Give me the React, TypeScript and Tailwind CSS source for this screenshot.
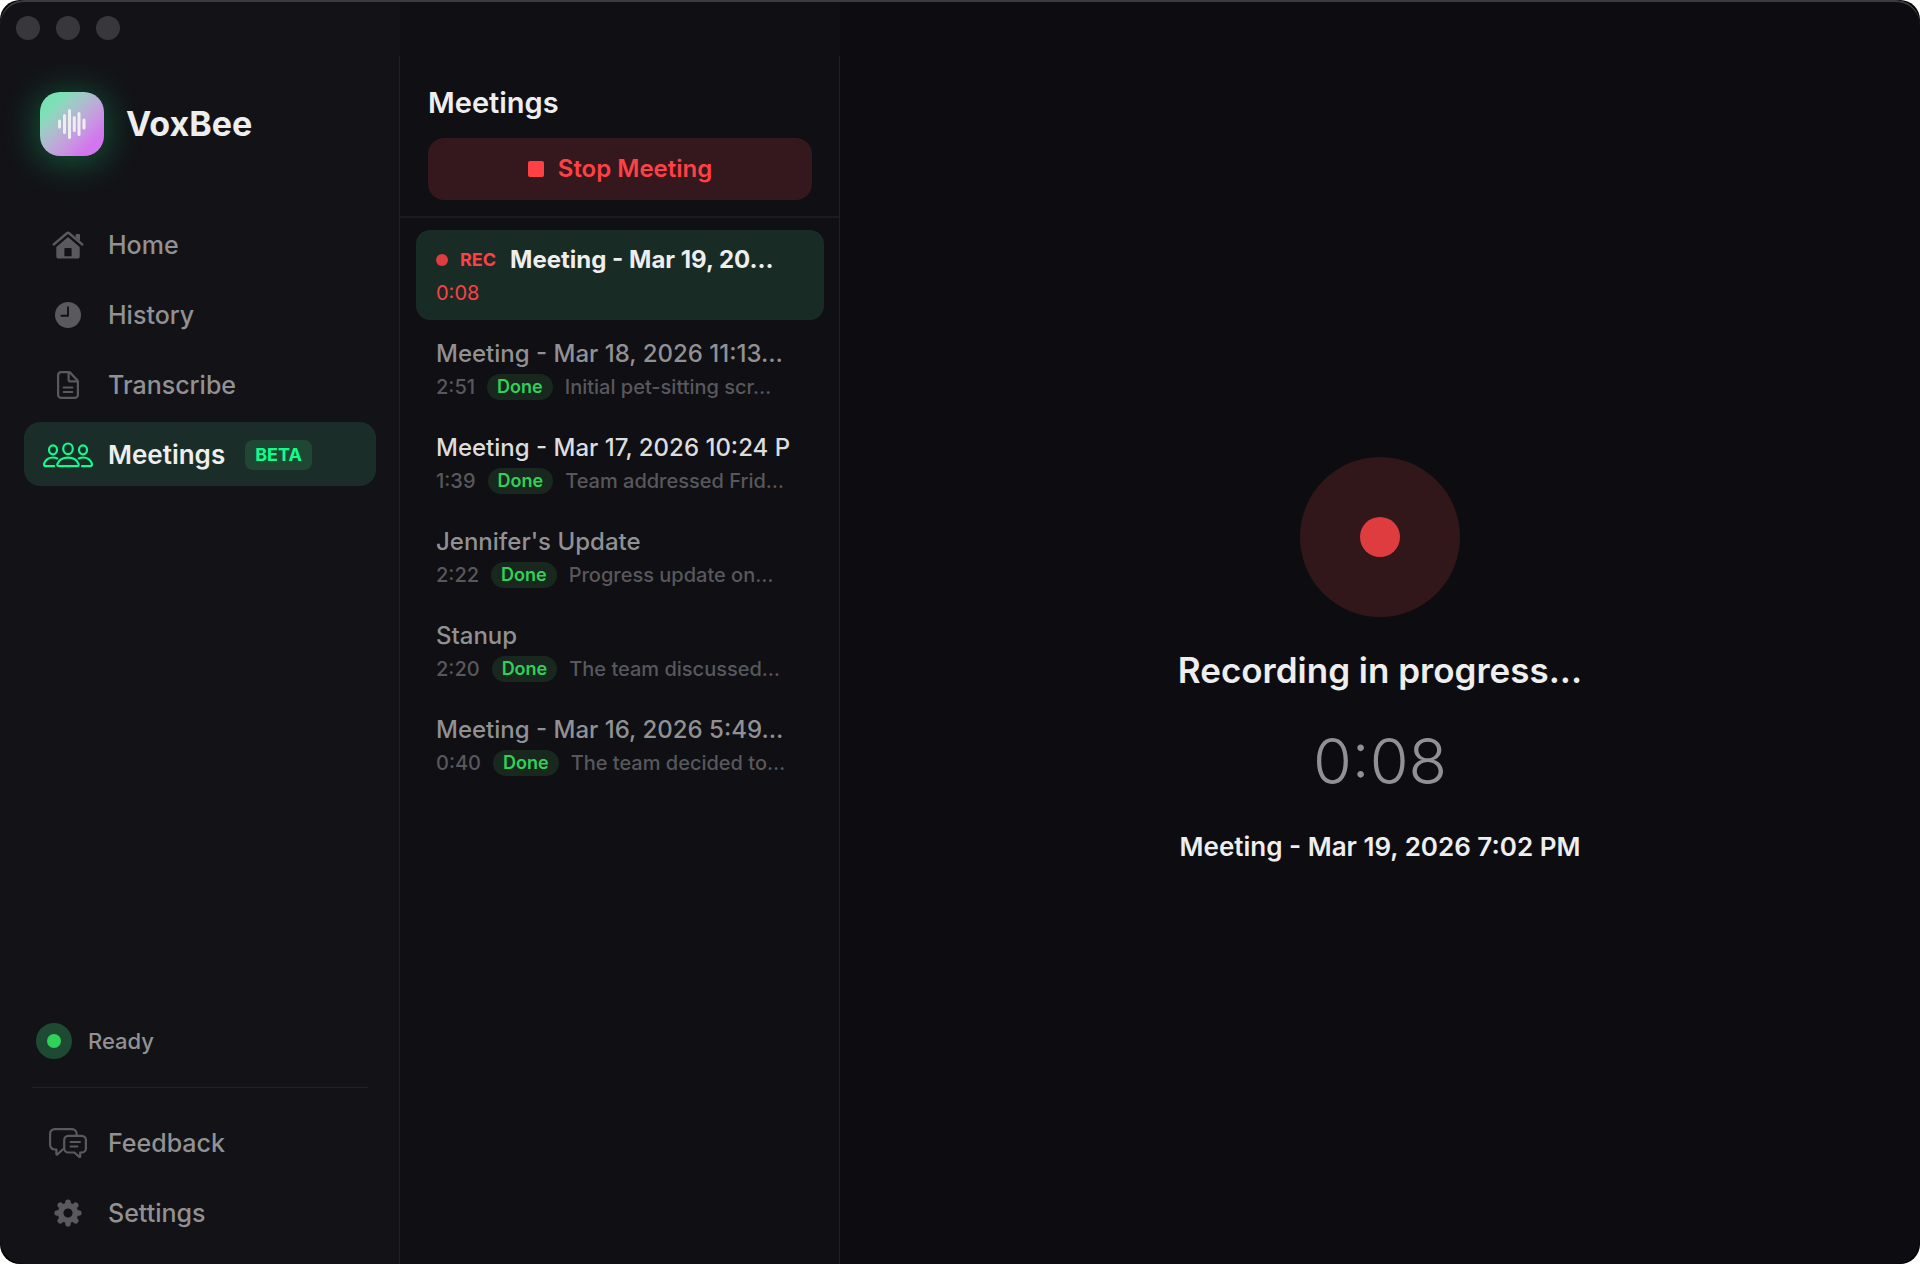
import React from 'react';
import clsx from 'clsx';

type IconProps = { className?: string };

function HomeIcon({ className }: IconProps) {
  return (
    <svg viewBox="0 0 32 28" className={className} fill="none" aria-hidden="true">
      <path d="M1.800 13.400 14.900 2.200a1.700 1.700 0 0 1 2.200 0L30.200 13.400" stroke="currentColor" strokeWidth="2.500" strokeLinecap="round" strokeLinejoin="round" />
      <path d="M23.600 4a1 1 0 0 1 1-1H27a1 1 0 0 1 1 1v6l-4.400-3.700Z" fill="currentColor" />
      <path fillRule="evenodd" d="M16 5.900 27.700 15.900V25a2.600 2.600 0 0 1-2.600 2.600H6.900A2.600 2.600 0 0 1 4.300 25v-9.100L16 5.900Zm-2.900 11a.7.7 0 0 0-.7.700v7.600h7.200v-7.600a.7.7 0 0 0-.7-.7h-5.800Z" fill="currentColor" />
    </svg>
  );
}

function ClockIcon({ className }: IconProps) {
  return (
    <svg viewBox="0 0 26 26" className={className} aria-hidden="true">
      <circle cx="13" cy="13" r="13" fill="currentColor" />
      <path d="M13 5.200v8.600H6.400" fill="none" stroke="#131317" strokeWidth="1.900" strokeLinecap="round" strokeLinejoin="round" />
    </svg>
  );
}

function DocIcon({ className }: IconProps) {
  return (
    <svg viewBox="0 0 22 28" className={className} fill="none" stroke="currentColor" strokeWidth="2.200" strokeLinecap="round" strokeLinejoin="round" aria-hidden="true">
      <path d="M4.200 1.100h7.300c.8 0 1.400.3 1.900.8l6.700 7c.5.500.8 1.100.8 1.900v12.900a3.200 3.200 0 0 1-3.200 3.200H4.300a3.200 3.200 0 0 1-3.200-3.200V4.300a3.200 3.200 0 0 1 3.100-3.200Z" />
      <path d="M11.600 1.500v7.200c0 1.100.6 1.700 1.700 1.700h7.200" />
      <path d="M6.500 16.500h9M6.500 21h9" strokeWidth="1.800" />
    </svg>
  );
}

function PeopleIcon({ className }: IconProps) {
  return (
    <svg viewBox="0 0 50 26" className={className} fill="none" stroke="currentColor" strokeWidth="2.200" strokeLinecap="round" strokeLinejoin="round" aria-hidden="true">
      <ellipse cx="25" cy="6.800" rx="4.800" ry="5.300" />
      <ellipse cx="10" cy="7.800" rx="4" ry="4.500" />
      <ellipse cx="40" cy="7.800" rx="4" ry="4.500" />
      <path d="M16 24.200c-1.500 0-2.100-1-1.500-2.400 1.400-3.400 5.500-6.100 10.500-6.100s9.100 2.700 10.500 6.100c.6 1.400 0 2.400-1.500 2.400H16Z" />
      <path d="M14.200 16.400a10 10 0 0 0-4.200-.9c-4.200 0-7.300 2.300-8.600 5.400-.8 1.900-.2 3.300 1.500 3.300H11" />
      <path d="M35.800 16.400a10 10 0 0 1 4.200-.9c4.200 0 7.300 2.300 8.600 5.400.8 1.900.2 3.300-1.500 3.300H39" />
    </svg>
  );
}

function ChatIcon({ className }: IconProps) {
  return (
    <svg viewBox="0 0 38 30" className={className} fill="none" stroke="currentColor" strokeWidth="2.200" strokeLinecap="round" strokeLinejoin="round" aria-hidden="true">
      <path d="M27.600 7V5.700A4.600 4.600 0 0 0 23 1.100H5.700a4.600 4.600 0 0 0-4.600 4.600v11.200a4.600 4.600 0 0 0 4.600 4.600h1.700v4.600c0 .5.500.7.900.4l5.400-5" />
      <path d="M19.300 7.800h13.500a4.100 4.100 0 0 1 4.100 4.100v8.500a4.100 4.100 0 0 1-4.100 4.100h-1.600v3.900c0 .5-.5.700-.9.400l-4.900-4.300h-6.100a4.100 4.100 0 0 1-4.100-4.100v-8.500a4.100 4.100 0 0 1 4.100-4.100Z" />
      <path d="M21.500 14h9.500M21.500 18.500h7" strokeWidth="1.900" />
    </svg>
  );
}

function GearIcon({ className }: IconProps) {
  return (
    <svg viewBox="-14 -14 28 28" className={className} aria-hidden="true">
      <g stroke="currentColor" strokeWidth="5.600" strokeLinecap="round">
        <path d="M0-8V-10.800M0 8v2.800M-8 0h-2.800M8 0h2.800" />
        <path d="M-5.700-5.700l-2-2M5.700 5.700l2 2M-5.700 5.700l-2 2M5.700-5.700l2-2" />
      </g>
      <circle r="7.400" fill="none" stroke="currentColor" strokeWidth="5.600" />
    </svg>
  );
}

function Logo() {
  return (
    <div className="flex size-16 items-center justify-center rounded-[20px] bg-linear-135 from-[#7ce0b6] from-20% via-[#bfa6da] via-55% to-[#d276ee] to-80% shadow-[0_4px_32px_4px_rgba(20,190,110,0.36)]">
      <svg viewBox="0 0 28 30" className="h-[30px] w-7" stroke="#eeeeee" strokeWidth="3" strokeLinecap="round" aria-hidden="true">
        <path d="M1.500 12v6M6.500 6.500v17M11.500 1.500v27M16.300 8.500v13M21 4.500v21M26 11v8" />
      </svg>
    </div>
  );
}

const navigation = [
  { name: 'Home', icon: HomeIcon, iconClass: 'h-7 w-8' },
  { name: 'History', icon: ClockIcon, iconClass: 'size-[26px]' },
  { name: 'Transcribe', icon: DocIcon, iconClass: 'h-7 w-[22px]' },
  { name: 'Meetings', icon: PeopleIcon, iconClass: 'h-[26px] w-[50px]', badge: 'BETA' },
];

const footerNav = [
  { name: 'Feedback', icon: ChatIcon, iconClass: 'h-[30px] w-[38px]' },
  { name: 'Settings', icon: GearIcon, iconClass: 'size-7' },
];

const meetings = [
  { title: 'Meeting - Mar 18, 2026 11:13…', time: '2:51', summary: 'Initial pet-sitting scr…' },
  { title: 'Meeting - Mar 17, 2026 10:24 P', time: '1:39', summary: 'Team addressed Frid…', hovered: true },
  { title: "Jennifer's Update", time: '2:22', summary: 'Progress update on…' },
  { title: 'Stanup', time: '2:20', summary: 'The team discussed…' },
  { title: 'Meeting - Mar 16, 2026 5:49…', time: '0:40', summary: 'The team decided to…' },
];

type NavItem = {
  name: string;
  icon: (props: IconProps) => React.JSX.Element;
  iconClass: string;
  badge?: string;
};

function NavLink({ item, active }: { item: NavItem; active?: boolean }) {
  const Icon = item.icon;
  return (
    <a
      href="#"
      className={clsx(
        'flex h-16 items-center rounded-2xl px-4 pt-[2px] leading-8',
        active ? 'bg-[#1b2d28] text-[26px] font-semibold text-[#eeeeee]' : 'text-[25px] font-medium text-[#919193]',
      )}
    >
      <span className={clsx('mr-3 flex w-14 shrink-0 justify-center', active ? 'text-[#0cff8c]' : 'text-[#5a5a5e]')}>
        <Icon className={item.iconClass} />
      </span>
      {item.name}
      {item.badge && (
        <span className="ml-5 rounded-lg bg-[#1f4733] px-[10px] text-lg leading-[30px] font-bold text-[#0cff8c]">
          {item.badge}
        </span>
      )}
    </a>
  );
}

function Sidebar() {
  return (
    <aside className="flex w-[400px] shrink-0 flex-col bg-[#131317]">
      <div className="flex h-14 shrink-0 items-center gap-4 px-4">
        <button aria-label="Close" className="size-6 rounded-full bg-[#38373b]" />
        <button aria-label="Minimize" className="size-6 rounded-full bg-[#38373b]" />
        <button aria-label="Zoom" className="size-6 rounded-full bg-[#38373b]" />
      </div>

      <div className="flex flex-1 flex-col border-r border-[#202024]">
        <div className="flex items-center gap-[22px] px-10 pt-9">
          <Logo />
          <h1 className="text-[34px] leading-10 font-bold text-[#eeeeee]">VoxBee</h1>
        </div>

        <nav className="mt-14 flex flex-col gap-[6px] pr-[23px] pl-6">
          {navigation.map((item) => (
            <NavLink key={item.name} item={item} active={item.name === 'Meetings'} />
          ))}
        </nav>

        <div className="mt-auto flex items-center gap-4 px-9">
          <span className="flex size-9 items-center justify-center rounded-full bg-[#1e4a34]">
            <span className="size-[14px] rounded-full bg-[#30d158]" />
          </span>
          <span className="text-[22px] leading-7 font-medium text-[#919193]">Ready</span>
        </div>

        <hr className="mt-7 mr-[31px] ml-8 border-[#202024]" />

        <nav className="mt-[22px] mb-5 flex flex-col gap-[6px] pr-[23px] pl-6">
          {footerNav.map((item) => (
            <NavLink key={item.name} item={item} />
          ))}
        </nav>
      </div>
    </aside>
  );
}

function MeetingList() {
  return (
    <section className="flex w-[440px] shrink-0 flex-col bg-[#0f0f14] pt-14">
      <div className="flex flex-1 flex-col border-r border-[#202024]">
        <div className="border-b-2 border-[#1c1c20] pt-[29px] pr-[27px] pb-4 pl-7">
          <h2 className="text-[29px] leading-9 font-semibold text-[#eeeeee]">Meetings</h2>
          <button className="mt-[17px] flex h-[62px] w-full items-center justify-center gap-[14px] rounded-2xl bg-[#35181d] text-2xl font-semibold text-[#ff4045]">
            <span className="size-4 rounded-xs bg-[#ff4045]" />
            Stop Meeting
          </button>
        </div>

        <ul className="flex flex-col gap-1 pt-3 pr-[15px] pl-4 whitespace-nowrap">
          <li className="rounded-[14px] bg-[#192b25] px-5 py-[14px]">
            <div className="flex h-8 items-center">
              <span className="size-3 rounded-full bg-[#df3c40]" />
              <span className="ml-3 text-lg font-bold text-[#ff4045]">REC</span>
              <span className="ml-[14px] text-2xl font-bold text-[#eeeeee]">Meeting - Mar 19, 20…</span>
            </div>
            <div className="mt-1 text-xl leading-[26px] text-[#ff4045]">0:08</div>
          </li>

          {meetings.map((meeting) => (
            <li key={meeting.title} className="px-5 py-[14px]">
              <div className={clsx('text-2xl leading-8 font-medium', meeting.hovered ? 'text-[#dddddd]' : 'text-[#919193]')}>
                {meeting.title}
              </div>
              <div className="mt-1 flex h-[26px] items-center gap-3 text-xl font-medium text-[#58585c]">
                <span>{meeting.time}</span>
                <span className="rounded-full bg-[#18281f] px-[10px] text-lg leading-[26px] font-semibold text-[#30d158]">Done</span>
                <span>{meeting.summary}</span>
              </div>
            </li>
          ))}
        </ul>
      </div>
    </section>
  );
}

function RecordingView() {
  return (
    <main className="flex flex-1 flex-col items-center justify-center bg-[#0d0d11] pt-14">
      <div className="flex size-40 items-center justify-center rounded-full bg-[#32171a]">
        <div className="size-10 rounded-full bg-[#df3c40]" />
      </div>
      <h2 className="mt-8 text-[35px] leading-[42px] font-semibold text-[#eeeeee]">Recording in progress...</h2>
      <p className="mt-8 text-[63px] leading-[76px] font-light text-[#919193]">0:08</p>
      <p className="mt-8 text-[26px] leading-8 font-semibold text-[#eeeeee]">Meeting - Mar 19, 2026 7:02 PM</p>
    </main>
  );
}

export default function App() {
  return (
    <div className="rounded-[20px] bg-black font-[Inter,sans-serif]">
      <div className="relative flex min-h-screen overflow-hidden rounded-3xl">
        <Sidebar />
        <MeetingList />
        <RecordingView />
        <div className="pointer-events-none absolute inset-0 rounded-3xl shadow-[inset_0_2px_0_#3c3c40]" />
      </div>
    </div>
  );
}
